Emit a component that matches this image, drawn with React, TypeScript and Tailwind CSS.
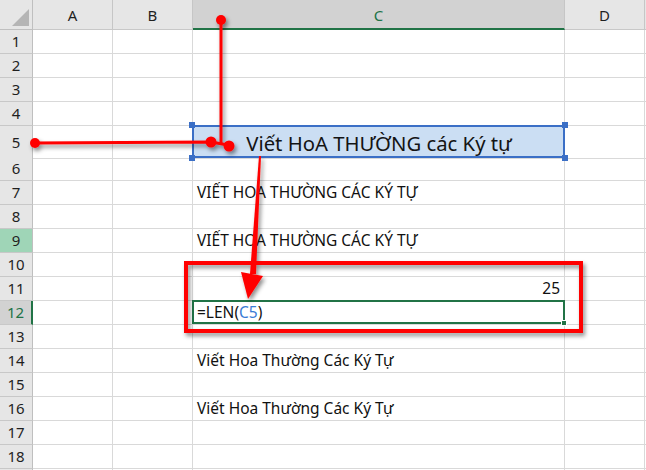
import React from "react";

const FONT = { fontFamily: '"Noto Sans", "Open Sans", sans-serif' };

type RowDef = { n: number; h: string; c?: React.ReactNode; kind?: "sel" | "green" | "active"; hide?: boolean };

function Row({ r }: { r: RowDef }) {
  const hdrCls =
    r.kind === "green"
      ? "bg-[#9fd5b7] text-[#1f1f1f] border-r border-[#bfbfbf]"
      : r.kind === "active"
      ? "bg-[#d2d2d2] text-[#217346] border-r-2 border-r-[#217346]"
      : "bg-[#e6e6e6] text-[#1f1f1f] border-r border-[#bfbfbf]";
  return (
    <div className={`grid grid-cols-[33px_80px_80px_372px_80px_1fr] ${r.h}`}>
      <div className={`flex items-center justify-center border-b border-b-[#c8c8c8] text-[15px] ${hdrCls}`}>
        {r.hide ? "" : r.n}
      </div>
      <div className="border-r border-b border-[#d9d9d9]" />
      <div className="border-r border-b border-[#d9d9d9]" />
      {r.c}
      <div className="border-r border-b border-[#d9d9d9]" />
      <div className="border-b border-[#d9d9d9]" />
    </div>
  );
}

function TextCell({ children, right }: { children?: React.ReactNode; right?: boolean }) {
  return (
    <div
      className={`flex items-end border-r border-b border-[#d9d9d9] px-[4px] pb-[1px] text-[15.5px] leading-[21px] text-[#111] whitespace-nowrap ${
        right ? "justify-end" : "justify-start"
      }`}
    >
      {children}
    </div>
  );
}

export default function App() {
  const upper = "VIẾT HOA THƯỜNG CÁC KÝ TỰ";
  const proper = "Viết Hoa Thường Các Ký Tự";
  const rows: RowDef[] = [
    { n: 1, h: "h-[24px]", c: <TextCell /> },
    { n: 2, h: "h-[24px]", c: <TextCell /> },
    { n: 3, h: "h-[24px]", c: <TextCell /> },
    { n: 4, h: "h-[24px]", c: <TextCell /> },
    {
      n: 5,
      h: "h-[31px]",
      c: (
        <div className="relative flex items-center justify-center border-r border-b border-[#d9d9d9] bg-[#cbdef3] text-[20.3px] text-[#141414] whitespace-nowrap">
          <span className="pl-[1px] pt-[2px]">Viết HoA THƯỜNG các Ký tự</span>
          <div className="absolute -left-[1px] -top-[1px] -right-[1px] -bottom-[0px] border-2 border-[#3b6fc6]" />
          <div className="absolute -left-[4px] -top-[4px] w-[6px] h-[6px] bg-[#3b6fc6]" />
          <div className="absolute -right-[4px] -top-[4px] w-[6px] h-[6px] bg-[#3b6fc6]" />
          <div className="absolute -left-[4px] -bottom-[3px] w-[6px] h-[6px] bg-[#3b6fc6]" />
          <div className="absolute -right-[4px] -bottom-[3px] w-[6px] h-[6px] bg-[#3b6fc6]" />
        </div>
      ),
    },
    { n: 6, h: "h-[24px]", c: <TextCell /> },
    { n: 7, h: "h-[24px]", c: <TextCell>{upper}</TextCell> },
    { n: 8, h: "h-[24px]", c: <TextCell /> },
    { n: 9, h: "h-[24px]", kind: "green", c: <TextCell>{upper}</TextCell> },
    { n: 10, h: "h-[24px]", c: <TextCell /> },
    { n: 11, h: "h-[24px]", c: <TextCell right>25</TextCell> },
    {
      n: 12,
      h: "h-[24px]",
      kind: "active",
      c: (
        <div className="relative flex items-end border-r border-b border-[#d9d9d9] px-[4px] pb-[1px] text-[15.5px] leading-[21px] text-[#111] whitespace-nowrap">
          <span>
            =LEN(<span className="text-[#3a7bd5]">C5</span>)
          </span>
          <div className="absolute -left-[1px] -top-[1px] -right-[1px] bottom-0 border-2 border-[#217346]" />
          <div className="absolute -right-[3px] -bottom-[2px] w-[6px] h-[6px] bg-[#217346] border border-white" />
        </div>
      ),
    },
    { n: 13, h: "h-[24px]", c: <TextCell /> },
    { n: 14, h: "h-[24px]", c: <TextCell>{proper}</TextCell> },
    { n: 15, h: "h-[24px]", c: <TextCell /> },
    { n: 16, h: "h-[24px]", c: <TextCell>{proper}</TextCell> },
    { n: 17, h: "h-[24px]", c: <TextCell /> },
    { n: 18, h: "h-[24px]", c: <TextCell /> },
    { n: 19, h: "h-[24px]", hide: true, c: <TextCell /> },
  ];

  return (
    <div className="relative w-[646px] h-[470px] overflow-hidden bg-white" style={FONT}>
      {/* column headers */}
      <div className="grid grid-cols-[33px_80px_80px_372px_80px_1fr] h-[30px] text-[15px] text-[#1f1f1f]">
        <div className="relative bg-[#e6e6e6] border-r border-b border-[#bfbfbf]">
          <div className="absolute right-[3px] bottom-[3px] w-0 h-0 border-l-[17px] border-l-transparent border-b-[17px] border-b-[#b5b5b5]" />
        </div>
        <div className="flex items-center justify-center bg-[#e6e6e6] border-r border-b border-[#c8c8c8] border-r-[#c6c6c6] pt-[2px]">A</div>
        <div className="flex items-center justify-center bg-[#e6e6e6] border-r border-b border-[#c8c8c8] border-r-[#c6c6c6] pt-[2px]">B</div>
        <div className="flex items-center justify-center bg-[#d2d2d2] border-r border-r-[#c6c6c6] border-b-2 border-b-[#217346] text-[#217346] pt-[2px]">C</div>
        <div className="flex items-center justify-center bg-[#e6e6e6] border-r border-b border-[#c8c8c8] border-r-[#c6c6c6] pt-[2px]">D</div>
        <div className="bg-[#e6e6e6] border-b border-[#c8c8c8]" />
      </div>
      {rows.map((r) => (
        <Row key={r.n} r={r} />
      ))}

      {/* annotations */}
      <svg className="absolute left-0 top-0 pointer-events-none" width="646" height="470" viewBox="0 0 646 470">
        <defs>
          <filter id="sh" x="-20%" y="-20%" width="140%" height="140%">
            <feDropShadow dx="2" dy="3" stdDeviation="2" floodColor="#000" floodOpacity="0.45" />
          </filter>
        </defs>
        <g filter="url(#sh)" fill="#ff0000" stroke="#ff0000">
          <rect x="186" y="263" width="395" height="68" fill="none" strokeWidth="4" />
          <path d="M35 143 L211 142 L228 145" fill="none" strokeWidth="3" strokeLinejoin="round" />
          <path d="M221 20 V145" fill="none" strokeWidth="3" />
          <circle cx="35" cy="143" r="5" stroke="none" />
          <circle cx="211" cy="142" r="5.5" stroke="none" />
          <circle cx="229" cy="146" r="5.5" stroke="none" />
          <circle cx="221" cy="20" r="5" stroke="none" />
          <polygon points="259,156 261,156 256,274 250,274" stroke="none" />
          <polygon points="241,272 263,276 248,299" stroke="none" />
        </g>
      </svg>
    </div>
  );
}
